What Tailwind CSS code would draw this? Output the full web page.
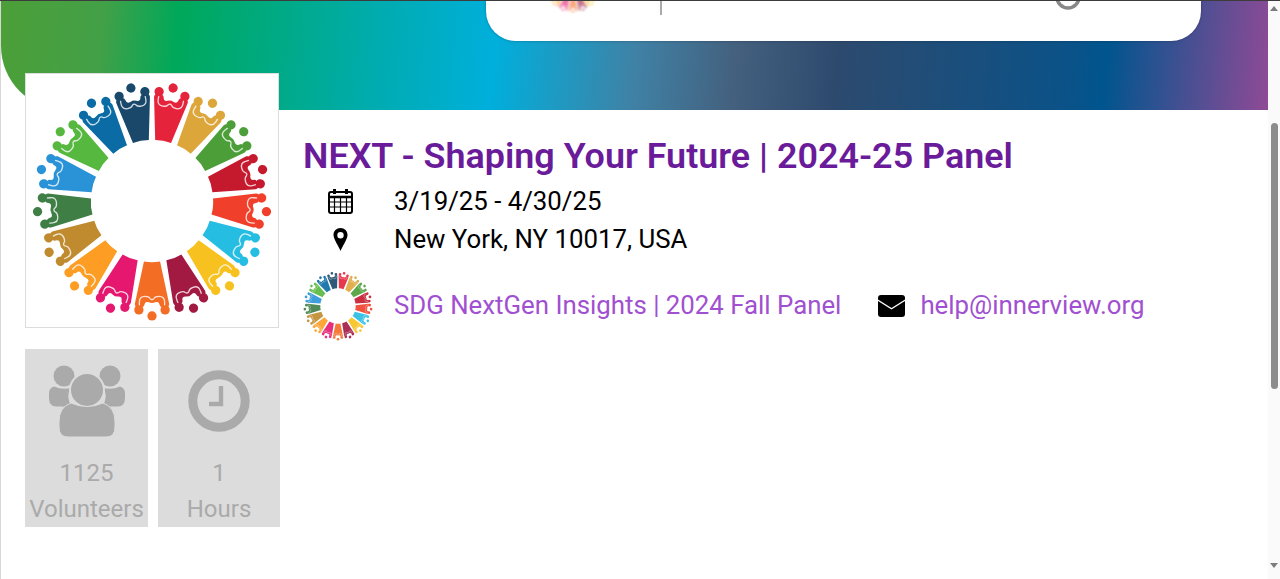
<!DOCTYPE html>
<html lang="en">
<head>
    <meta charset="UTF-8">
    <meta name="viewport" content="width=device-width, initial-scale=1.0">
    <title>NEXT - Shaping Your Future</title>
    <script src="https://cdn.jsdelivr.net/npm/@tailwindcss/browser@4"></script>
</head>
<body class="h-[579px] overflow-hidden bg-white font-['Roboto',sans-serif] text-black">
    <div class="flex h-full border-t border-[#3c3c3c]">
        <!-- page -->
        <main class="flex-1 border-l border-[#d8d8d8] min-w-0">
            <!-- banner -->
            <div class="h-[109px] overflow-hidden rounded-bl-[64px] bg-[linear-gradient(95deg,#4c9f38_0%,#43a047_8%,#00a85a_14%,#00acb0_30%,#00afdc_39%,#3f82a6_50%,#44607e_58%,#2d4a6e_66%,#0b5288_84%,#00558e_87%,#8f4a96_100%)]">
                <div class="ml-[485px] flex h-[40px] w-[715px] items-start overflow-hidden rounded-b-[30px] bg-white shadow-[0_0_3px_rgba(0,0,0,0.3)]">
                    <svg class="ml-[57px] mt-[-48px] h-[60px] w-[60px] shrink-0 opacity-60 blur-[1px]" viewBox="-120 -120 240 240"><use href="#wheel"/></svg>
                    <div class="ml-[57px] h-[14px] w-[2px] bg-[#aaaaaa] blur-[0.5px]"></div>
                    <svg class="ml-[394px] mt-[-14px] h-[24px] w-[24px] blur-[0.7px]" viewBox="0 0 24 24" fill="none" stroke="#888888" stroke-width="3.500"><circle cx="12" cy="10" r="11"/></svg>
                </div>
            </div>

            <div class="flex pl-[24px]">
                <!-- left column -->
                <div class="w-[256px] shrink-0">
                    <div class="relative mt-[-37px] flex h-[255px] w-[254px] items-center justify-center overflow-hidden border border-[#dddddd] bg-white">
                        <svg class="h-[242px] w-[242px] shrink-0 blur-[0.5px]" viewBox="-120 -120 240 240">
                            <defs>
                                <g id="person">
                                    <path d="M-8 -60 Q0 -61.500 8 -60 L17 -102 Q17 -106 13 -106 Q8 -106 7.500 -103 Q7 -99 3 -100.500 Q0 -102 -3 -100.500 Q-7 -99 -7.500 -103 Q-8 -106 -13 -106 Q-17 -106 -17 -102Z"/>
                                    <path d="M-12.500 -105 V-100 Q-12.500 -94.500 -7 -94.500 Q-3 -94.500 -2 -96.500 Q0 -99 2 -96.500 Q3 -94.500 7 -94.500 Q12.500 -94.500 12.500 -100 V-105" fill="none" stroke="#ffffff" stroke-width="1.300" opacity="0.8"/>
                                    <circle cx="-13" cy="-108" r="4.600"/>
                                    <circle cx="13" cy="-108" r="4.600"/>
                                    <circle cx="0" cy="-114" r="4.600"/>
                                </g>
                                <g id="wheel">
                                    <use href="#person" fill="#f36d25" transform="rotate(180)"/>
                                    <use href="#person" fill="#e5176f" transform="rotate(201.180)"/>
                                    <use href="#person" fill="#fd9d24" transform="rotate(222.350)"/>
                                    <use href="#person" fill="#bf8b2e" transform="rotate(243.530)"/>
                                    <use href="#person" fill="#3f7e44" transform="rotate(264.710)"/>
                                    <use href="#person" fill="#2a93d8" transform="rotate(285.880)"/>
                                    <use href="#person" fill="#56b83f" transform="rotate(307.060)"/>
                                    <use href="#person" fill="#0a6ba5" transform="rotate(328.240)"/>
                                    <use href="#person" fill="#19486a" transform="rotate(349.410)"/>
                                    <use href="#person" fill="#e5243b" transform="rotate(10.590)"/>
                                    <use href="#person" fill="#dda63a" transform="rotate(31.760)"/>
                                    <use href="#person" fill="#4c9f38" transform="rotate(52.940)"/>
                                    <use href="#person" fill="#c5192d" transform="rotate(74.120)"/>
                                    <use href="#person" fill="#f0402b" transform="rotate(95.290)"/>
                                    <use href="#person" fill="#26bde2" transform="rotate(116.470)"/>
                                    <use href="#person" fill="#f7c11f" transform="rotate(137.650)"/>
                                    <use href="#person" fill="#a21942" transform="rotate(158.820)"/>
                                </g>
                            </defs>
                            <use href="#wheel"/>
                        </svg>
                    </div>

                    <div class="mt-[21px] flex gap-[10px]">
                        <div class="flex h-[178px] w-[123px] flex-col items-center bg-[#dcdcdc] pt-[16px] text-[24px] leading-[36px] text-[#aaaaaa]">
                            <svg class="h-[73px] w-[78px]" viewBox="0 0 78 73" fill="#aaaaaa">
                                <circle cx="16" cy="11" r="10.500"/>
                                <circle cx="62" cy="11" r="10.500"/>
                                <path d="M6 21.500 Q14 25 23 23 Q17 32 24 41.500 H8 Q1 41.500 1 33 V28 Q1 23 6 21.500Z"/>
                                <path d="M72 21.500 Q64 25 55 23 Q61 32 54 41.500 H70 Q77 41.500 77 33 V28 Q77 23 72 21.500Z"/>
                                <circle cx="39" cy="25" r="17" stroke="#dcdcdc" stroke-width="2"/>
                                <path d="M23 38 Q39 45 55 38 Q67 42 67 57 V62 Q67 72 58 72 H20 Q11 72 11 62 V57 Q11 42 23 38Z" stroke="#dcdcdc" stroke-width="1"/>
                            </svg>
                            <p class="mt-[17px]">1125</p>
                            <p>Volunteers</p>
                        </div>
                        <div class="flex h-[178px] w-[122px] flex-col items-center bg-[#dcdcdc] pt-[21px] text-[24px] leading-[36px] text-[#aaaaaa]">
                            <svg class="h-[62px] w-[62px]" viewBox="0 0 62 62" fill="none" stroke="#aaaaaa">
                                <circle cx="31" cy="31" r="26.200" stroke-width="9"/>
                                <path d="M33 16 V34 H21" stroke-width="4.400"/>
                            </svg>
                            <p class="mt-[23px]">1</p>
                            <p>Hours</p>
                        </div>
                    </div>
                </div>

                <!-- details -->
                <div class="ml-[22px] flex-1">
                    <h1 class="mt-[24px] text-[35.900px] font-semibold leading-[44px] text-[#6a1b9a]">NEXT - Shaping Your Future | 2024-25 Panel</h1>

                    <div class="mt-[5px] flex h-[38px] items-center text-[25.800px]">
                        <div class="flex w-[91px] justify-center pl-[1px] pr-[18px]">
                            <svg class="mt-[-2px] h-[26px] w-[25px]" viewBox="0 0 25 26" fill="none" stroke="#000000">
                                <rect x="1" y="4" width="23" height="21" rx="2" stroke-width="2"/>
                                <path d="M1 9 H24" stroke-width="2.500"/>
                                <path d="M1 14 H24 M1 19 H24 M6.500 9 V25 M12.500 9 V25 M18.500 9 V25" stroke-width="1.200"/>
                                <path d="M6.500 1 V6 M18.500 1 V6" stroke-width="3"/>
                            </svg>
                        </div>
                        <span class="mb-[2px]">3/19/25 - 4/30/25</span>
                    </div>
                    <div class="flex h-[38px] items-center text-[25.800px]">
                        <div class="flex w-[91px] justify-center pl-[1px] pr-[18px]">
                            <svg class="mt-[-2px] h-[23px] w-[15px]" viewBox="0 0 15 23"><path fill-rule="evenodd" d="M7.500 0 C3.400 0 0.500 3 0.500 7 C0.500 11 5.500 18 7.500 23 C9.500 18 14.500 11 14.500 7 C14.500 3 11.600 0 7.500 0Z M7.500 4 A3.200 3.200 0 1 1 7.500 10.400 A3.200 3.200 0 1 1 7.500 4Z"/></svg>
                        </div>
                        <span class="mb-[2px]">New York, NY 10017, USA</span>
                    </div>

                    <div class="mt-[12px] flex items-center text-[25.800px] text-[#a050d0]">
                        <svg class="h-[70px] w-[70px] shrink-0 opacity-90 blur-[0.6px]" viewBox="-120 -120 240 240"><use href="#wheel"/></svg>
                        <a class="mb-[2px] ml-[21px]" href="#">SDG NextGen Insights | 2024 Fall Panel</a>
                        <svg class="ml-[37px] h-[22px] w-[27px]" viewBox="0 0 27 22">
                            <path d="M3 0 H24 Q27 0 27 3 V4.500 L13.500 13 L0 4.500 V3 Q0 0 3 0Z"/>
                            <path d="M0 6 L13.500 14.500 L27 6 V19 Q27 22 24 22 H3 Q0 22 0 19Z"/>
                        </svg>
                        <a class="mb-[2px] ml-[15px]" href="#">help@innerview.org</a>
                    </div>
                </div>
            </div>
        </main>

        <!-- scrollbar -->
        <aside class="flex w-[12px] shrink-0 flex-col items-center bg-[#fafafa] pt-[5px]">
            <div class="h-0 w-0 border-x-[4px] border-b-[5px] border-x-transparent border-b-[#7d7d7d]"></div>
            <div class="mt-[112px] h-[266px] w-[7px] rounded-full bg-[#8c8c8c]"></div>
            <div class="mt-[174px] h-0 w-0 border-x-[4px] border-t-[5px] border-x-transparent border-t-[#7d7d7d]"></div>
        </aside>
    </div>
</body>
</html>
